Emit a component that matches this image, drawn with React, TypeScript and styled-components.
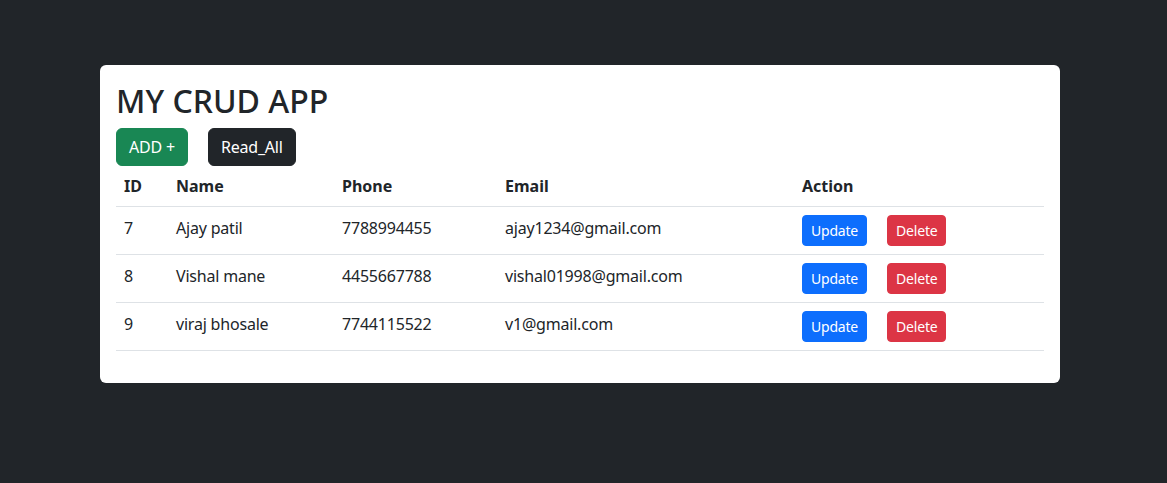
import React from "react";
import styled, { createGlobalStyle } from "styled-components";

const Global = createGlobalStyle`
  html, body { margin: 0; padding: 0; }
  body {
    background: #212529;
    font-family: "Noto Sans", "Open Sans", sans-serif;
    color: #212529;
    font-size: 16px;
    line-height: 1.5;
  }
`;

const Page = styled.div`
  padding: 65px 107px 100px 100px;
`;

const Card = styled.div`
  width: 960px;
  box-sizing: border-box;
  background: #fff;
  border-radius: 6px;
  padding: 16px;
`;

const Title = styled.h2`
  margin: 0 0 8px 0;
  font-size: 32px;
  font-weight: 500;
  line-height: 39px;
  height: 39px;
`;

const Toolbar = styled.div`
  display: flex;
  gap: 20px;
`;

const Btn = styled.button<{ $bg: string; $small?: boolean }>`
  font-family: inherit;
  border: 1px solid ${(p) => p.$bg};
  background: ${(p) => p.$bg};
  color: #fff;
  border-radius: ${(p) => (p.$small ? "4px" : "6px")};
  font-size: ${(p) => (p.$small ? "14px" : "16px")};
  line-height: 1.5;
  padding: ${(p) => (p.$small ? "4px 8px" : "6px 12px")};
  height: ${(p) => (p.$small ? "31px" : "38px")};
  letter-spacing: -0.2px;
  cursor: pointer;
`;

const Table = styled.table`
  width: 100%;
  table-layout: fixed;
  border-collapse: collapse;
  margin-bottom: 16px;
`;

const Th = styled.th<{ $w: number }>`
  width: ${(p) => p.$w}px;
  box-sizing: border-box;
  text-align: left;
  font-weight: 700;
  padding: 8px;
  border-bottom: 1px solid #dee2e6;
  line-height: 24px;
`;

const Td = styled.td<{ $text?: boolean }>`
  padding: ${(p) => (p.$text ? "5px 8px 11px" : "8px")};
  border-bottom: 1px solid #dee2e6;
  vertical-align: middle;
  line-height: 24px;
  letter-spacing: -0.2px;
`;

const Actions = styled.div`
  display: flex;
  gap: 20px;
`;

const rows = [
  { id: 7, name: "Ajay patil", phone: "7788994455", email: "ajay1234@gmail.com" },
  { id: 8, name: "Vishal mane", phone: "4455667788", email: "vishal01998@gmail.com" },
  { id: 9, name: "viraj bhosale", phone: "7744115522", email: "v1@gmail.com" },
];

export default function App() {
  return (
    <>
      <Global />
      <Page>
        <Card>
          <Title>MY CRUD APP</Title>
          <Toolbar>
            <Btn $bg="#198754">ADD +</Btn>
            <Btn $bg="#212529">Read_All</Btn>
          </Toolbar>
          <Table>
            <thead>
              <tr>
                <Th $w={52}>ID</Th>
                <Th $w={166}>Name</Th>
                <Th $w={163}>Phone</Th>
                <Th $w={297}>Email</Th>
                <Th $w={250}>Action</Th>
              </tr>
            </thead>
            <tbody>
              {rows.map((r) => (
                <tr key={r.id}>
                  <Td $text>{r.id}</Td>
                  <Td $text>{r.name}</Td>
                  <Td $text>{r.phone}</Td>
                  <Td $text>{r.email}</Td>
                  <Td>
                    <Actions>
                      <Btn $bg="#0d6efd" $small>Update</Btn>
                      <Btn $bg="#dc3545" $small>Delete</Btn>
                    </Actions>
                  </Td>
                </tr>
              ))}
            </tbody>
          </Table>
        </Card>
      </Page>
    </>
  );
}
